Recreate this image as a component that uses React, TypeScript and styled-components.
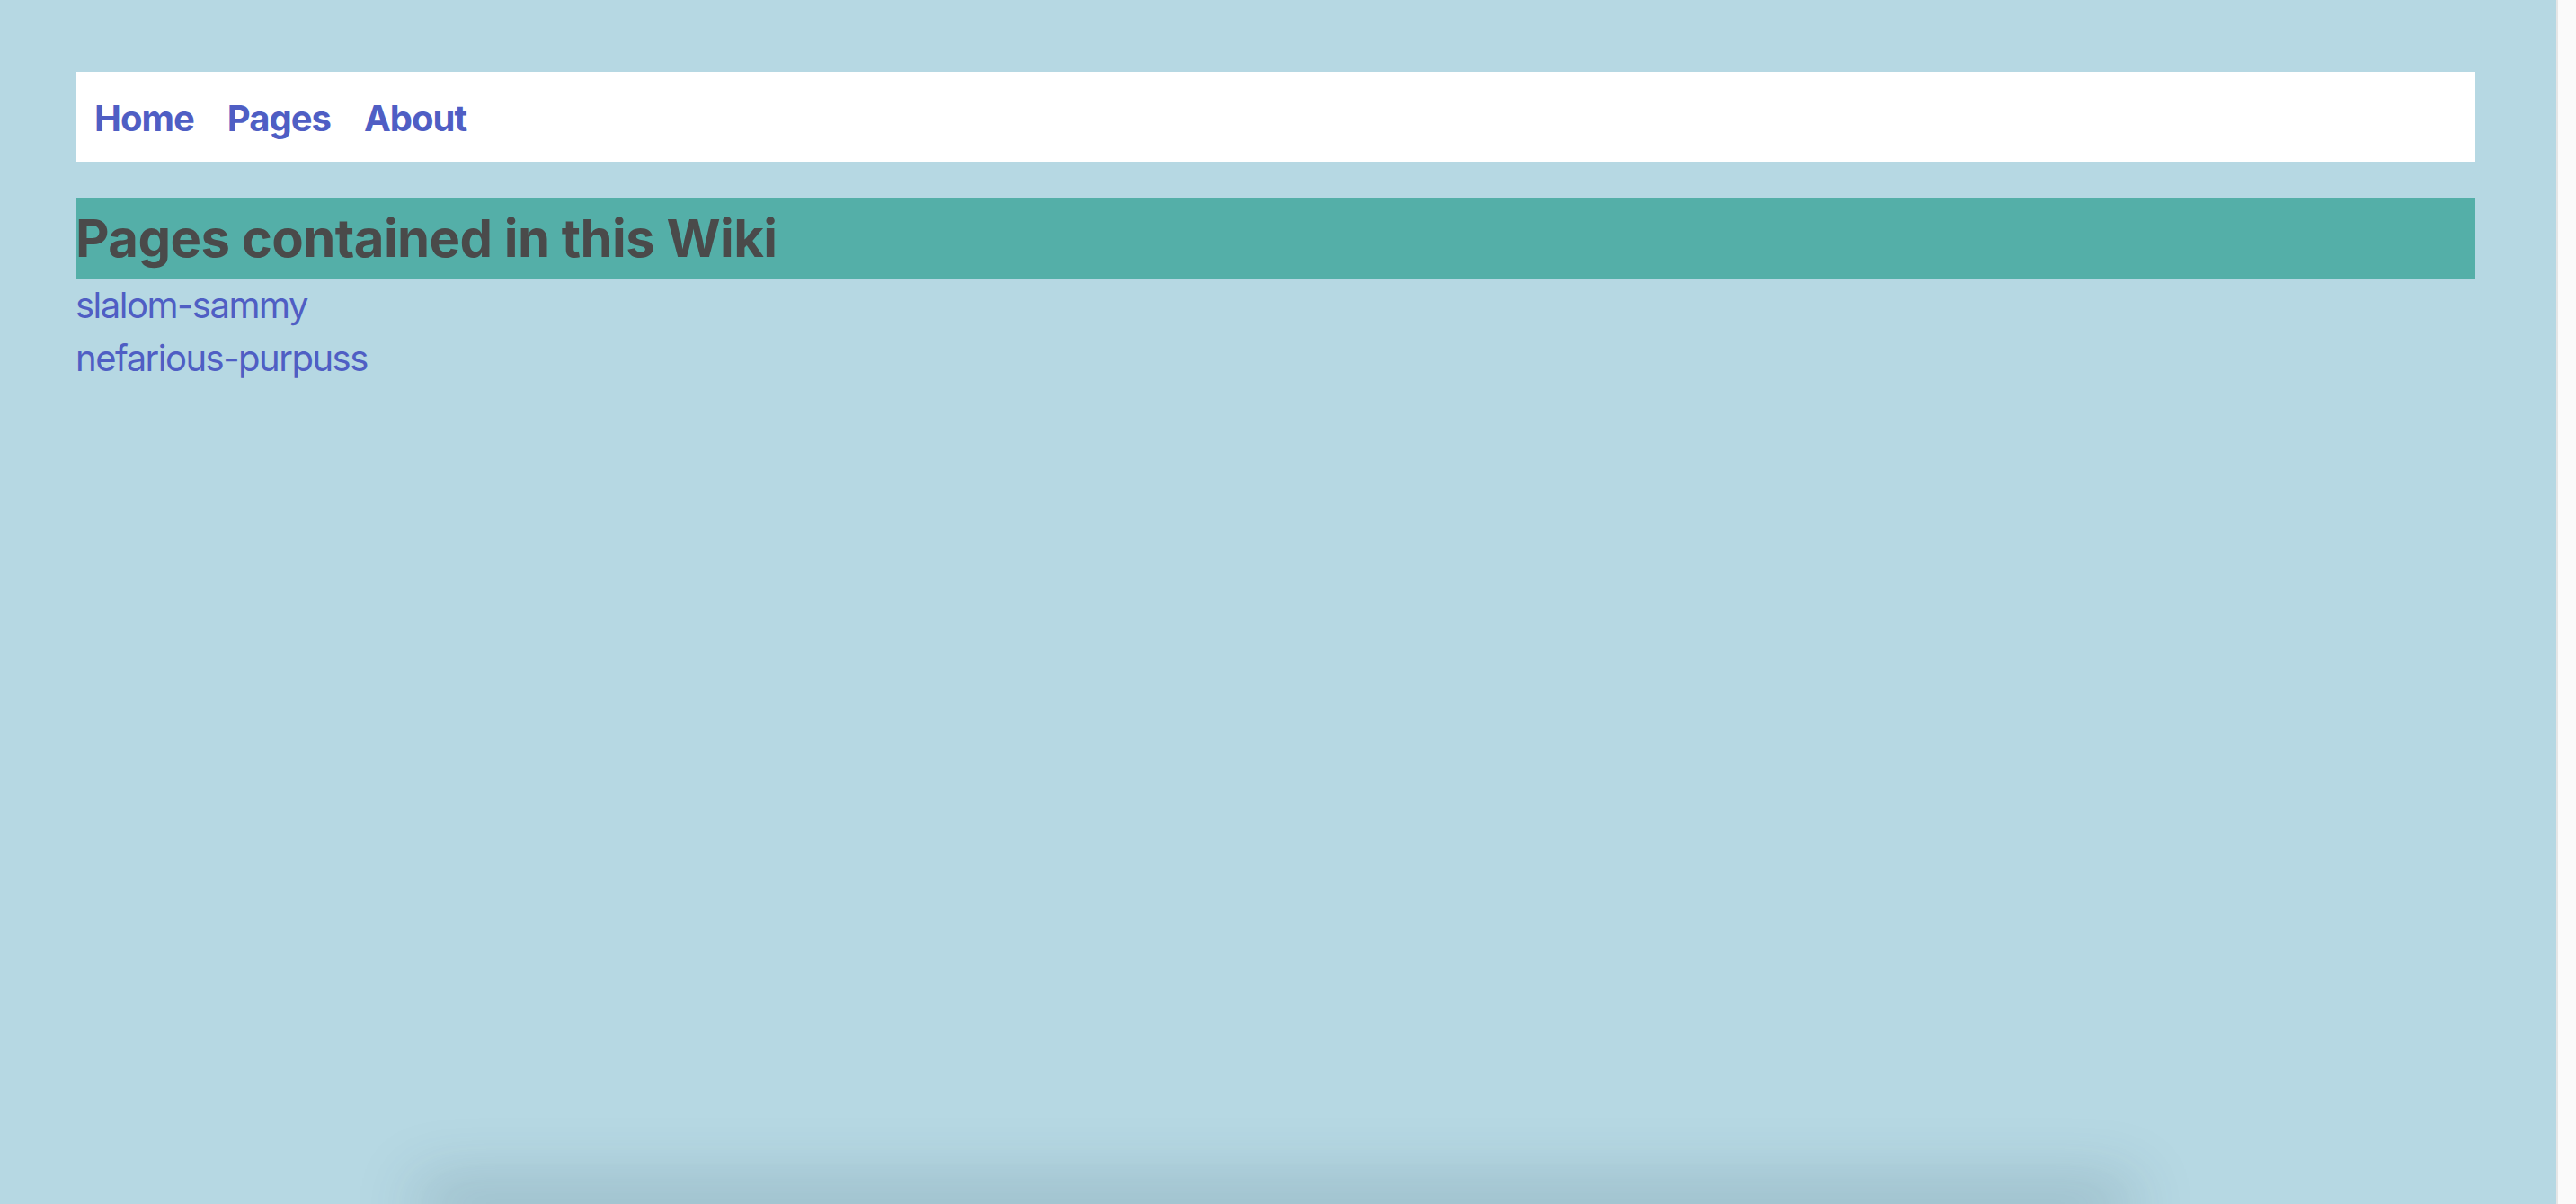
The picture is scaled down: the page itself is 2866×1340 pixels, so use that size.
import React from "react";
import styled, { createGlobalStyle } from "styled-components";

const Global = createGlobalStyle`
  html, body { margin: 0; padding: 0; height: 100%; overflow: hidden; }
  body { background: #b6d8e3; font-family: Inter, "Noto Sans", sans-serif; }
  #root { height: 100%; }
`;

const Shell = styled.div`
  display: flex;
  height: 100vh;
  width: 100vw;
`;

const Main = styled.main`
  flex: 1;
  display: flex;
  flex-direction: column;
  padding: 80px 90px 0 84px;
  background: #b6d8e3;
  overflow: hidden;
  min-width: 0;
`;

const ScrollTrack = styled.div`
  width: 20px;
  flex-shrink: 0;
  background: #fafafa;
  border-left: 2px solid #e6e6e6;
`;

const Nav = styled.nav`
  display: flex;
  align-items: center;
  gap: 37px;
  height: 100px;
  padding: 0 21px;
  background: #ffffff;
  box-sizing: border-box;
`;

const NavLink = styled.a`
  font-family: Inter, sans-serif;
  font-weight: 700;
  font-size: 40px;
  letter-spacing: -1px;
  color: #4f5ec4;
  text-decoration: none;
  padding-top: 2px;
`;

const Heading = styled.h1`
  margin: 40px 0 0;
  height: 90px;
  line-height: 90px;
  font-family: Inter, sans-serif;
  font-weight: 700;
  font-size: 58px;
  letter-spacing: -0.55px;
  color: #4a4a4a;
  background: #54afa8;
`;

const PageList = styled.ul`
  list-style: none;
  margin: 0;
  padding: 0;
  font-family: Inter, sans-serif;
  font-size: 40px;
  line-height: 59px;
`;

const PageItem = styled.li`
  margin: 0;
`;

const PageLink = styled.a`
  font-weight: 400;
  letter-spacing: -1.5px;
  color: #4f5ec4;
  text-decoration: none;
`;

const ShadowCard = styled.div`
  margin-top: auto;
  align-self: center;
  width: 1860px;
  height: 0;
  flex-shrink: 0;
  border-radius: 20px;
  box-shadow: 0 0 70px 22px rgba(40, 70, 90, 0.26);
`;

export default function App() {
  const pages = ["slalom-sammy", "nefarious-purpuss"];
  return (
    <>
      <Global />
      <Shell>
        <Main>
          <Nav>
            <NavLink href="#">Home</NavLink>
            <NavLink href="#">Pages</NavLink>
            <NavLink href="#">About</NavLink>
          </Nav>
          <Heading>Pages contained in this Wiki</Heading>
          <PageList>
            {pages.map((p) => (
              <PageItem key={p}>
                <PageLink href="#">{p}</PageLink>
              </PageItem>
            ))}
          </PageList>
          <ShadowCard />
        </Main>
        <ScrollTrack />
      </Shell>
    </>
  );
}
